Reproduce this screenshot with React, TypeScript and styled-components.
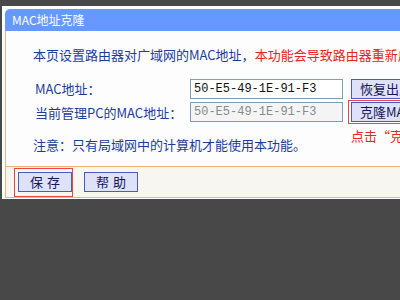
import styled, { createGlobalStyle } from "styled-components";

const GlobalStyle = createGlobalStyle`
  html, body {
    margin: 0;
    padding: 0;
    background: #484848;
  }
  body {
    font-family: "Noto Sans CJK SC", "Liberation Sans", sans-serif;
  }
`;

const Page = styled.div`
  width: 400px;
  height: 300px;
  overflow: hidden;
  padding: 6px 0 0 2px;
  box-sizing: border-box;
  background: #484848;
`;

const Frame = styled.div`
  width: 540px;
  background: #ffffff;
  padding: 3px 0 1px 3px;
`;

const TitleBar = styled.div`
  height: 22px;
  line-height: 22px;
  background: #6699ff;
  border-radius: 5px 0 0 0;
  color: #ffffff;
  font-size: 12px;
  padding-left: 7px;
  white-space: nowrap;
`;

const Body = styled.div`
  border-left: 1px solid #f3b27a;
  border-bottom: 1px solid #f3b27a;
  background: #fdfdfd;
`;

const Content = styled.div`
  padding: 16px 0 13px 27px;
  color: #1c3c9c;
  font-size: 13px;
`;

const Intro = styled.div`
  line-height: 16px;
  white-space: nowrap;
  margin-bottom: 14px;
`;

const Warn = styled.span`
  color: #ee2222;
`;

const FormGrid = styled.div`
  display: grid;
  grid-template-columns: 157px 161px auto;
  grid-template-rows: 23px 24px 13px;
  align-items: center;
`;

const Label = styled.div`
  padding-left: 2px;
  white-space: nowrap;
`;

const MacInput = styled.input<{ $muted?: boolean }>`
  width: 153px;
  height: 20px;
  box-sizing: border-box;
  border: 1px solid #7f9db9;
  padding: 0 3px;
  margin: 0;
  font-family: "Liberation Mono", "DejaVu Sans Mono", monospace;
  font-size: 12px;
  color: ${({ $muted }) => ($muted ? "#8a8a8a" : "#111111")};
  background: ${({ $muted }) => ($muted ? "#f4f4f4" : "#ffffff")};
  outline: none;
`;

const Button = styled.button`
  display: block;
  height: 20px;
  box-sizing: border-box;
  border: 1px solid #4a5cc0;
  background: #dfe2f6;
  color: #16165a;
  font-family: "Noto Sans CJK SC", sans-serif;
  font-size: 13px;
  line-height: 18px;
  padding: 0 6px;
  margin: 0;
  white-space: nowrap;
  cursor: pointer;
`;

const WideButton = styled(Button)`
  width: 120px;
  text-align: left;
  padding-left: 8px;
`;

const Highlight = styled.div`
  display: flex;
  border: 1px solid #e8464a;
  padding: 1px 2px;
  margin-left: -3px;
  width: fit-content;
`;

const Hint = styled.div`
  grid-column: 3;
  color: #ee2222;
  line-height: 12px;
  height: 7px;
  padding-top: 6px;
  white-space: nowrap;
`;

const Note = styled.div`
  line-height: 16px;
  white-space: nowrap;
`;

const Footer = styled.div`
  border-top: 1px solid #f3b27a;
  background: #f8f6f0;
  height: 29px;
  display: flex;
  align-items: flex-start;
  gap: 11px;
  padding: 1px 0 0 8px;
`;

const SaveFrame = styled.div`
  border: 1px solid #e8464a;
  padding: 3px 0 4px 3px;
  display: flex;
`;

const FooterButton = styled(Button)`
  width: 54px;
  letter-spacing: 4px;
  padding: 0 0 0 4px;
`;

const HelpWrap = styled.div`
  display: flex;
  padding-top: 4px;
`;

export default function App() {
  return (
    <>
      <GlobalStyle />
      <Page>
        <Frame>
          <TitleBar>MAC地址克隆</TitleBar>
          <Body>
            <Content>
              <Intro>
                本页设置路由器对广域网的MAC地址，
                <Warn>本功能会导致路由器重新启动。</Warn>
              </Intro>
              <FormGrid>
                <Label>MAC地址：</Label>
                <MacInput defaultValue="50-E5-49-1E-91-F3" />
                <WideButton>恢复出厂MAC</WideButton>
                <Label>当前管理PC的MAC地址：</Label>
                <MacInput $muted readOnly value="50-E5-49-1E-91-F3" />
                <Highlight>
                  <WideButton>克隆MAC地址</WideButton>
                </Highlight>
                <Hint>点击“克隆MAC地址”</Hint>
              </FormGrid>
              <Note>注意：只有局域网中的计算机才能使用本功能。</Note>
            </Content>
            <Footer>
              <SaveFrame>
                <FooterButton>保存</FooterButton>
              </SaveFrame>
              <HelpWrap>
                <FooterButton>帮助</FooterButton>
              </HelpWrap>
            </Footer>
          </Body>
        </Frame>
      </Page>
    </>
  );
}
